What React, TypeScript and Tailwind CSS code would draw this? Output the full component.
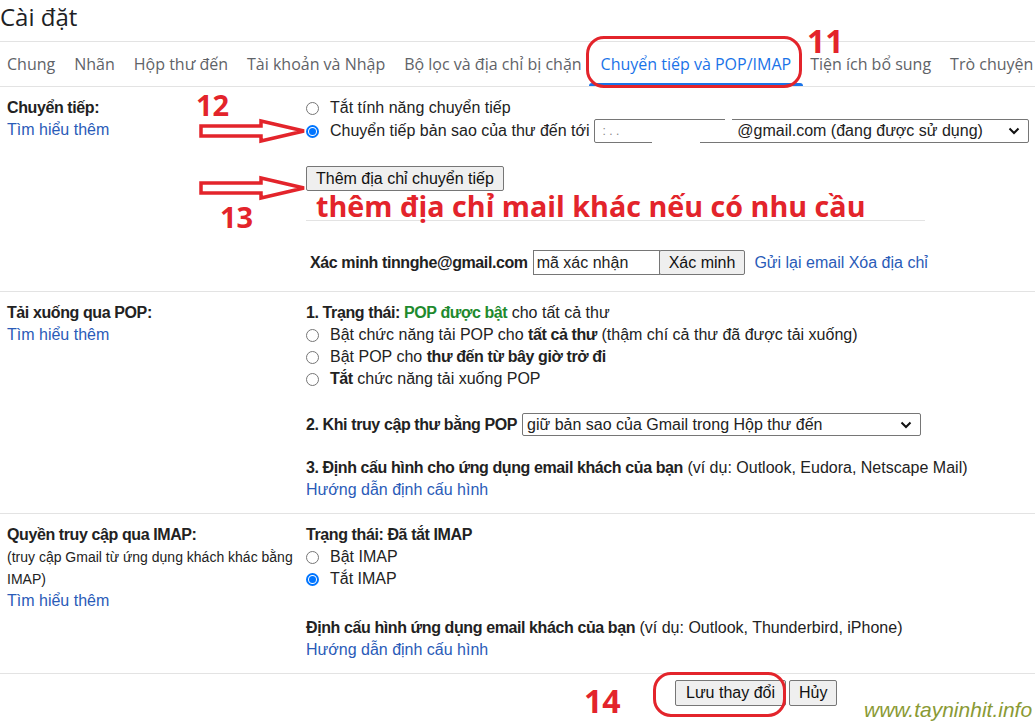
import React from "react"

const tabs = [
  "Chung",
  "Nhãn",
  "Hộp thư đến",
  "Tài khoản và Nhập",
  "Bộ lọc và địa chỉ bị chặn",
  "Chuyển tiếp và POP/IMAP",
  "Tiện ích bổ sung",
  "Trò chuyện và Meet",
]

const Radio = ({ checked = false }: { checked?: boolean }) =>
  checked ? (
    <span className="flex h-[13px] w-[13px] shrink-0 items-center justify-center rounded-full border-2 border-[#0075ff] bg-white">
      <span className="h-[7px] w-[7px] rounded-full bg-[#0075ff]" />
    </span>
  ) : (
    <span className="h-[13px] w-[13px] shrink-0 rounded-full border border-[#767676] bg-white" />
  )

const RadioRow = ({ checked, children }: { checked?: boolean; children: React.ReactNode }) => (
  <div className="flex h-[22px] items-center gap-[11px]">
    <Radio checked={checked} />
    <span>{children}</span>
  </div>
)

const B = ({ children, className = "" }: { children: React.ReactNode; className?: string }) => (
  <b className={`tracking-[-0.4px] ${className}`}>{children}</b>
)

const Chevron = () => (
  <svg width="12" height="8" viewBox="0 0 12 8" className="shrink-0">
    <path d="M1.5 1.5l4.5 4.5 4.5-4.5" fill="none" stroke="#111" strokeWidth="2" />
  </svg>
)

const Btn = ({ children, className = "" }: { children: React.ReactNode; className?: string }) => (
  <button
    type="button"
    className={`flex items-center rounded-[2px] border border-[#767676] bg-[#efefef] px-[9px] text-[#111] ${className}`}
  >
    {children}
  </button>
)

const Link = ({ children }: { children: React.ReactNode }) => (
  <a className="cursor-pointer text-[#2a5bb8]">{children}</a>
)

const Arrow = ({ top }: { top: number }) => (
  <svg
    width="112"
    height="26"
    viewBox="0 0 112 26"
    className="absolute left-[197px]"
    style={{ top }}
  >
    <path
      d="M4 8 L64 8 L64 3 L107 13 L64 23 L64 18 L4 18 Z"
      fill="white"
      stroke="#e3242b"
      strokeWidth="3.5"
      strokeLinejoin="miter"
    />
  </svg>
)

export default function App() {
  return (
    <div className="relative h-[723px] w-[1035px] overflow-hidden bg-white font-['Liberation_Sans',Arial,sans-serif] text-[16px] leading-[22px] text-[#222]">
      {/* title */}
      <div className="h-[41px] pt-[1px] font-['Open_Sans',sans-serif] text-[24px] leading-[32px] text-[#202124]">
        Cài đặt
      </div>

      {/* tabs */}
      <div className="flex h-[46px] items-center gap-[19px] overflow-hidden whitespace-nowrap border-y border-[#e3e3e3] pl-[7px] font-['Open_Sans',sans-serif] text-[16px] text-[#5f6368]">
        {tabs.map((t) => (
          <div
            key={t}
            className={`relative flex h-full shrink-0 items-center ${
              t === "Chuyển tiếp và POP/IMAP" ? "text-[#1a73e8]" : ""
            }`}
          >
            {t}
            {t === "Chuyển tiếp và POP/IMAP" && (
              <span className="absolute -left-[12px] -right-[12px] bottom-0 h-[3px] rounded-t bg-[#1a73e8]" />
            )}
          </div>
        ))}
      </div>

      {/* forwarding */}
      <div className="flex h-[205px] border-b border-[#e3e3e3] pt-[10px]">
        <div className="w-[306px] shrink-0 pl-[7px]">
          <B className="block">Chuyển tiếp:</B>
          <Link>Tìm hiểu thêm</Link>
        </div>
        <div className="flex flex-col">
          <RadioRow>Tắt tính năng chuyển tiếp</RadioRow>
          <div className="flex h-[24px] items-center gap-[11px]">
            <Radio checked />
            <span>Chuyển tiếp bản sao của thư đến tới</span>
            <div className="relative ml-[-7px] flex h-[24px] w-[435px] items-center rounded-[2px] border border-[#767676] pl-[8px] pr-[8px]">
              <span className="text-[12px] leading-none text-[#888]">: . .</span>
              <span className="ml-[118px] flex-1">@gmail.com (đang được sử dụng)</span>
              <Chevron />
              <span className="absolute -top-[1px] left-[130px] h-[2px] w-[7px] bg-white" />
              <span className="absolute -bottom-[1px] left-[57px] h-[2px] w-[48px] bg-white" />
            </div>
          </div>
          <div className="mt-[23px] flex">
            <Btn className="h-[25px]">Thêm địa chỉ chuyển tiếp</Btn>
          </div>
          <div className="mt-[29px] w-[619px] border-t border-[#e3e3e3]" />
          <div className="mt-[29px] flex h-[25px] items-center">
            <B className="ml-[4px] mr-[5px]">Xác minh tinnghe@gmail.com</B>
            <div className="flex h-[25px] w-[127px] items-center border border-[#767676] px-[3px]">mã xác nhận</div>
            <Btn className="ml-[-1px] h-[25px]">Xác minh</Btn>
            <span className="ml-[9px]">
              <Link>Gửi lại email Xóa địa chỉ</Link>
            </span>
          </div>
        </div>
      </div>

      {/* POP */}
      <div className="flex border-b border-[#e3e3e3] pb-[12px] pt-[10px]">
        <div className="w-[306px] shrink-0 pl-[7px]">
          <B className="block">Tải xuống qua POP:</B>
          <Link>Tìm hiểu thêm</Link>
        </div>
        <div className="flex flex-col">
          <div>
            <B>1. Trạng thái: </B>
            <B className="text-[#1e8a2e]">POP được bật</B> cho tất cả thư
          </div>
          <RadioRow>
            Bật chức năng tải POP cho <B>tất cả thư</B> (thậm chí cả thư đã được tải xuống)
          </RadioRow>
          <RadioRow>
            Bật POP cho <B>thư đến từ bây giờ trở đi</B>
          </RadioRow>
          <RadioRow>
            <B>Tắt</B> chức năng tải xuống POP
          </RadioRow>
          <div className="mt-[23px] flex h-[23px] items-center">
            <B className="mr-[5px]">2. Khi truy cập thư bằng POP</B>
            <div className="flex h-[23px] w-[399px] items-center rounded-[2px] border border-[#767676] pl-[4px] pr-[8px]">
              <span className="flex-1">giữ bản sao của Gmail trong Hộp thư đến</span>
              <Chevron />
            </div>
          </div>
          <div className="mt-[21px]">
            <B>3. Định cấu hình cho ứng dụng email khách của bạn</B> (ví dụ: Outlook, Eudora, Netscape Mail)
          </div>
          <Link>Hướng dẫn định cấu hình</Link>
        </div>
      </div>

      {/* IMAP */}
      <div className="flex border-b border-[#e3e3e3] pb-[12px] pt-[10px]">
        <div className="w-[306px] shrink-0 pl-[7px]">
          <B className="block">Quyền truy cập qua IMAP:</B>
          <div className="w-[295px] text-[14px]">(truy cập Gmail từ ứng dụng khách khác bằng IMAP)</div>
          <Link>Tìm hiểu thêm</Link>
        </div>
        <div className="flex flex-col">
          <B>Trạng thái: Đã tắt IMAP</B>
          <RadioRow>Bật IMAP</RadioRow>
          <RadioRow checked>Tắt IMAP</RadioRow>
          <div className="mt-[27px]">
            <B>Định cấu hình ứng dụng email khách của bạn</B> (ví dụ: Outlook, Thunderbird, iPhone)
          </div>
          <Link>Hướng dẫn định cấu hình</Link>
        </div>
      </div>

      {/* footer buttons */}
      <div className="flex gap-[3px] pl-[675px] pt-[6px]">
        <Btn className="h-[26px] px-[10px]">Lưu thay đổi</Btn>
        <Btn className="h-[26px] px-[8px]">Hủy</Btn>
      </div>

      {/* annotations */}
      <div className="absolute left-[586px] top-[36px] h-[52px] w-[216px] rounded-[18px] border-[3px] border-[#e3242b]" />
      <div className="absolute left-[653px] top-[672px] h-[45px] w-[133px] rounded-[18px] border-[3px] border-[#e3242b]" />
      <div className="absolute left-[807px] top-[25px] font-['Open_Sans',sans-serif] text-[32px] font-bold leading-none text-[#e3242b]">
        11
      </div>
      <div className="absolute left-[196px] top-[90px] font-['Open_Sans',sans-serif] text-[29px] font-bold leading-none text-[#e3242b]">
        12
      </div>
      <div className="absolute left-[220px] top-[202px] font-['Open_Sans',sans-serif] text-[29px] font-bold leading-none text-[#e3242b]">
        13
      </div>
      <div className="absolute left-[584px] top-[685px] font-['Open_Sans',sans-serif] text-[32px] font-bold leading-none text-[#e3242b]">
        14
      </div>
      <Arrow top={118} />
      <Arrow top={175} />
      <div className="absolute left-[316px] top-[192px] whitespace-nowrap font-['Open_Sans',sans-serif] text-[28.7px] font-bold leading-[28px] text-[#e3242b]">
        thêm địa chỉ mail khác nếu có nhu cầu
      </div>
      <div className="absolute left-[864px] top-[698px] font-['Liberation_Sans',Arial,sans-serif] text-[21px] italic leading-[24px] text-[#8a9a35]">
        www.tayninhit.info
      </div>
    </div>
  )
}
